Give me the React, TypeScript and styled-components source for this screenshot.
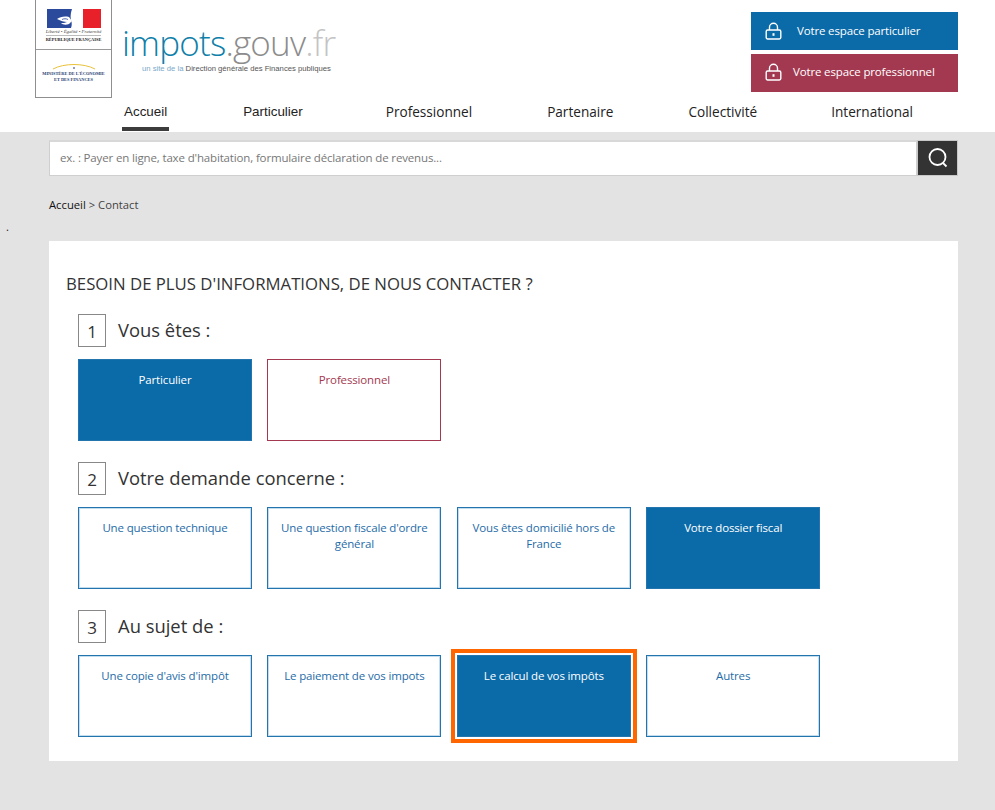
import React from 'react'
import styled, { createGlobalStyle } from 'styled-components'

const GlobalStyle = createGlobalStyle`
  html, body {
    margin: 0;
    padding: 0;
    background: #e3e3e3;
    font-family: "Open Sans", "Liberation Sans", sans-serif;
    color: #333;
  }
`

const Page = styled.div`
  width: 995px;
  height: 810px;
  overflow: hidden;
`

const Header = styled.header`
  height: 132px;
  background: #fff;
  display: flex;
  flex-direction: column;
`

const TopRow = styled.div`
  height: 98px;
  display: flex;
  padding: 0 37px 0 35px;
`

const LogoBox = styled.div`
  width: 75px;
  height: 97px;
  border: 1px solid #8f8f8f;
  border-top: 0;
  display: flex;
  flex-direction: column;
`

const LogoCell = styled.div`
  height: 50px;
  border-bottom: 1px solid #9a9a9a;
  display: flex;
  flex-direction: column;
  align-items: center;
  padding-top: 9px;
  box-sizing: border-box;
`

const MinistryCell = styled.div`
  flex: 1;
  display: flex;
  flex-direction: column;
  align-items: center;
  padding-top: 13px;
`

const Motto = styled.div`
  font-family: "Liberation Serif", serif;
  font-style: italic;
  font-size: 4.8px;
  line-height: 5px;
  margin-top: 1px;
  color: #444;
  white-space: nowrap;
`

const Republic = styled.div`
  font-family: "Liberation Serif", serif;
  font-weight: 700;
  font-size: 4.4px;
  line-height: 5px;
  margin-top: 1px;
  padding-top: 1px;
  border-top: 1px solid #bbb;
  color: #222;
  white-space: nowrap;
`

const Ministry = styled.div`
  font-family: "Liberation Serif", serif;
  font-weight: 700;
  font-size: 4.4px;
  line-height: 6px;
  margin-top: 1px;
  text-align: center;
  color: #2a3f72;
  white-space: nowrap;
`

const Brand = styled.div`
  margin: 23px 0 0 10px;
  flex: 1;
`

const BrandName = styled.div`
  font-family: "Open Sans", sans-serif;
  font-weight: 300;
  font-size: 35px;
  line-height: 40px;
  letter-spacing: -0.8px;
  color: #8c8c8c;
`

const BrandBlue = styled.span`
  color: #0f80a9;
`

const BrandLight = styled.span`
  color: #c4c4c4;
`

const BrandTag = styled.div`
  font-family: "Liberation Sans", sans-serif;
  font-size: 7.7px;
  line-height: 9px;
  margin: 1px 0 0 20px;
  color: #555;
  white-space: nowrap;
`

const TagBlue = styled.span`
  color: #7aa9c9;
`

const Spaces = styled.div`
  width: 207px;
  padding-top: 12px;
  display: flex;
  flex-direction: column;
  gap: 4px;
`

const SpaceLink = styled.a<{ $pro?: boolean }>`
  box-sizing: border-box;
  height: 38px;
  background: ${({ $pro }) => ($pro ? '#a33951' : '#0b6aa8')};
  color: #fff;
  font-size: 11.5px;
  letter-spacing: -0.15px;
  display: flex;
  align-items: center;
  padding: 0 0 ${({ $pro }) => ($pro ? '3px' : '1px')} 14px;
  white-space: nowrap;
`

const SpaceLabel = styled.span<{ $pro?: boolean }>`
  margin-left: ${({ $pro }) => ($pro ? '11px' : '15px')};
`

const Nav = styled.nav`
  display: flex;
  flex: 1;
  padding-left: 122px;
`

const Tab = styled.a<{ $active?: boolean; $gap: number; $arial?: boolean }>`
  box-sizing: border-box;
  margin-right: ${({ $gap }) => $gap}px;
  padding: 4px 2px 0;
  height: 33px;
  font-family: ${({ $arial }) => ($arial ? '"Liberation Sans", sans-serif' : '"Open Sans", sans-serif')};
  font-size: ${({ $arial }) => ($arial ? '13.4px' : '13.6px')};
  line-height: 19px;
  color: #222;
  border-bottom: 4px solid ${({ $active }) => ($active ? '#3c3c3c' : 'transparent')};
  white-space: nowrap;
`

const Main = styled.main`
  padding: 8px 37px 0 49px;
`

const SearchRow = styled.div`
  display: flex;
  height: 36px;
`

const SearchInput = styled.div`
  flex: 1;
  box-sizing: border-box;
  background: #fff;
  border: 1px solid #cfcfcf;
  border-top: 2px solid #d8d8d8;
  padding-left: 10px;
  font-size: 11.5px;
  letter-spacing: -0.15px;
  line-height: 31px;
  color: #777;
`

const SearchButton = styled.button`
  width: 41px;
  padding: 0;
  border: 1px solid #c8c8c8;
  background: #333;
  display: flex;
  align-items: center;
  justify-content: center;
`

const Breadcrumb = styled.div`
  margin-top: 21px;
  font-size: 11.25px;
  line-height: 16px;
  color: #444;
`

const Crumb = styled.span`
  color: #111;
`

const Dot = styled.div`
  margin: 7px 0 0 -43px;
  font-size: 11px;
  line-height: 14px;
  color: #222;
`

const Card = styled.section`
  margin-top: 7px;
  height: 520px;
  box-sizing: border-box;
  background: #fff;
  padding: 31px 17px 0;
`

const Title = styled.h1`
  margin: 0 0 18px;
  font-size: 16.75px;
  font-weight: 400;
  line-height: 24px;
  color: #333;
  white-space: nowrap;
`

const Step = styled.div`
  margin: 0 0 0 12px;
`

const StepHead = styled.div`
  display: flex;
  align-items: center;
  gap: 12px;
  height: 33px;
  margin-bottom: 12px;
`

const StepNumber = styled.div`
  box-sizing: border-box;
  width: 28px;
  height: 33px;
  border: 1px solid #888;
  text-align: center;
  font-size: 17px;
  line-height: 33px;
  color: #333;
`

const StepTitle = styled.h2`
  margin: -2px 0 0;
  font-size: 18.4px;
  font-weight: 400;
  color: #333;
`

const Choices = styled.div`
  display: flex;
  gap: 15.4px;
  margin-bottom: 21px;
`

const Choice = styled.a<{ $selected?: boolean; $pro?: boolean; $focus?: boolean }>`
  box-sizing: border-box;
  width: 174px;
  height: 82px;
  padding: 12px 10px 0;
  font-size: 11.5px;
  letter-spacing: -0.15px;
  line-height: 16px;
  text-align: center;
  display: block;
  background: ${({ $selected }) => ($selected ? '#0b6aa8' : '#fff')};
  color: ${({ $selected, $pro }) => ($selected ? '#fff' : $pro ? '#a33951' : '#1f6ca8')};
  border: 1px solid ${({ $pro }) => ($pro ? '#a33951' : '#2474ae')};
  box-shadow: ${({ $selected, $pro }) => ($selected || $pro ? 'none' : 'inset 0 0 0 1px #c3dcee')};
  outline: ${({ $focus }) => ($focus ? '4px solid #ff6600' : 'none')};
  outline-offset: 2px;
`

const LockIcon = () => (
  <svg width="17" height="18" viewBox="0 0 17 18" fill="none" stroke="#fff" strokeWidth="1.4">
    <path d="M4.5 8V5.2a4 4 0 0 1 8 0V8" />
    <rect x="1.2" y="8" width="14.6" height="9" rx="1.4" />
    <path d="M8.5 11.2v2.6" strokeWidth="2" />
  </svg>
)

const SearchIcon = () => (
  <svg width="22" height="22" viewBox="0 0 22 22" fill="none" stroke="#fff" strokeWidth="1.8">
    <circle cx="10.5" cy="10" r="8" />
    <path d="M16 16l3.5 3.5" />
  </svg>
)

const Marianne = () => (
  <svg width="54" height="19" viewBox="0 0 54 19">
    <rect x="0" y="0" width="25" height="19" fill="#2b4a9b" />
    <rect x="36" y="0" width="18" height="19" fill="#e8202a" />
    <path d="M25 0h11v3l-1 4 1 3v2l-2 2c-2 1-3 1-4 2l-1 3h-5c1-3 1-5 0-8-1-4 0-8 1-11z" fill="#fff" />
    <path d="M10 10c3-2 7-3 12-2l3 4-3 3c-3 1-6 1-8-1 2 0 4 0 6-1-3 0-6-1-10-3z" fill="#fff" />
    <path d="M15 10.5c2-1 4-1 6 0" stroke="#2b4a9b" strokeWidth="0.8" fill="none" />
  </svg>
)

const Arc = () => (
  <svg width="44" height="7" viewBox="0 0 44 7" fill="none">
    <path d="M1 6C12 0 32 0 43 6" stroke="#eac23a" strokeWidth="1" />
    <path d="M22 4v2" stroke="#2a3f72" strokeWidth="1" />
  </svg>
)

const steps: { label: string; choices: { text: string; selected?: boolean; pro?: boolean; focus?: boolean }[] }[] = [
  {
    label: 'Vous êtes :',
    choices: [{ text: 'Particulier', selected: true }, { text: 'Professionnel', pro: true }],
  },
  {
    label: 'Votre demande concerne :',
    choices: [
      { text: 'Une question technique' },
      { text: "Une question fiscale d'ordre général" },
      { text: 'Vous êtes domicilié hors de France' },
      { text: 'Votre dossier fiscal', selected: true },
    ],
  },
  {
    label: 'Au sujet de :',
    choices: [
      { text: "Une copie d'avis d'impôt" },
      { text: 'Le paiement de vos impots' },
      { text: 'Le calcul de vos impôts', selected: true, focus: true },
      { text: 'Autres' },
    ],
  },
]

const tabs = [
  { text: 'Accueil', gap: 72, active: true, arial: true },
  { text: 'Particulier', gap: 79, arial: true },
  { text: 'Professionnel', gap: 71 },
  { text: 'Partenaire', gap: 71 },
  { text: 'Collectivité', gap: 70 },
  { text: 'International', gap: 0 },
]

const App = () => (
  <Page>
    <GlobalStyle />
    <Header>
      <TopRow>
        <LogoBox>
          <LogoCell>
            <Marianne />
            <Motto>Liberté • Égalité • Fraternité</Motto>
            <Republic>RÉPUBLIQUE FRANÇAISE</Republic>
          </LogoCell>
          <MinistryCell>
            <Arc />
            <Ministry>
              MINISTÈRE DE L'ÉCONOMIE
              <br />
              ET DES FINANCES
            </Ministry>
          </MinistryCell>
        </LogoBox>
        <Brand>
          <BrandName>
            <BrandBlue>impots</BrandBlue>.gouv<BrandLight>.fr</BrandLight>
          </BrandName>
          <BrandTag>
            <TagBlue>un site de la</TagBlue> Direction générale des Finances publiques
          </BrandTag>
        </Brand>
        <Spaces>
          <SpaceLink>
            <LockIcon />
            <SpaceLabel>Votre espace particulier</SpaceLabel>
          </SpaceLink>
          <SpaceLink $pro>
            <LockIcon />
            <SpaceLabel $pro>Votre espace professionnel</SpaceLabel>
          </SpaceLink>
        </Spaces>
      </TopRow>
      <Nav>
        {tabs.map((tab) => (
          <Tab key={tab.text} $active={tab.active} $gap={tab.gap} $arial={tab.arial}>
            {tab.text}
          </Tab>
        ))}
      </Nav>
    </Header>
    <Main>
      <SearchRow>
        <SearchInput>ex. : Payer en ligne, taxe d'habitation, formulaire déclaration de revenus...</SearchInput>
        <SearchButton aria-label="Rechercher">
          <SearchIcon />
        </SearchButton>
      </SearchRow>
      <Breadcrumb>
        <Crumb>Accueil</Crumb> &gt; Contact
      </Breadcrumb>
      <Dot>.</Dot>
      <Card>
        <Title>BESOIN DE PLUS D'INFORMATIONS, DE NOUS CONTACTER ?</Title>
        {steps.map((step, index) => (
          <Step key={step.label}>
            <StepHead>
              <StepNumber>{index + 1}</StepNumber>
              <StepTitle>{step.label}</StepTitle>
            </StepHead>
            <Choices>
              {step.choices.map((choice) => (
                <Choice key={choice.text} $selected={choice.selected} $pro={choice.pro} $focus={choice.focus}>
                  {choice.text}
                </Choice>
              ))}
            </Choices>
          </Step>
        ))}
      </Card>
    </Main>
  </Page>
)

export default App
